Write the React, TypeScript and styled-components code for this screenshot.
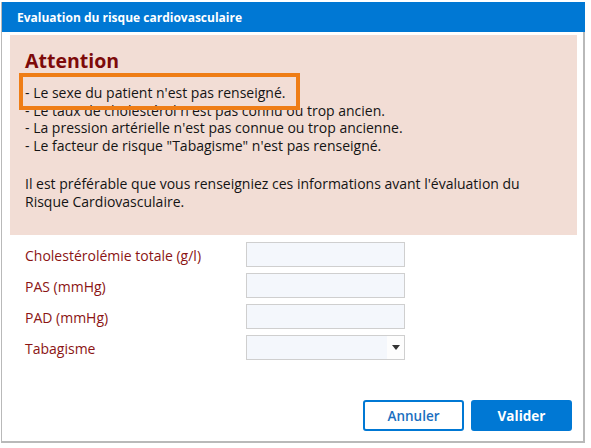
import { createGlobalStyle, styled } from "styled-components";

const GlobalStyle = createGlobalStyle`
  html, body {
    margin: 0;
    padding: 0;
    background: #ffffff;
  }
  body {
    font-family: "Open Sans", "Noto Sans", "Liberation Sans", sans-serif;
    font-size: 14px;
  }
`;

const rows = [
  { label: "Cholestérolémie totale (g/l)", kind: "input" },
  { label: "PAS (mmHg)", kind: "input" },
  { label: "PAD (mmHg)", kind: "input" },
  { label: "Tabagisme", kind: "select" },
];

const App = () => {
  return (
    <>
      <GlobalStyle />
      <Page>
        <Dialog>
          <TitleBar>Evaluation du risque cardiovasculaire</TitleBar>
          <Body>
            <Warning>
              <WarningTitle>Attention</WarningTitle>
              <WarningList>
                <Line>- Le sexe du patient n'est pas renseigné.</Line>
                <Line>- Le taux de cholestérol n'est pas connu ou trop ancien.</Line>
                <Line>- La pression artérielle n'est pas connue ou trop ancienne.</Line>
                <Line>- Le facteur de risque "Tabagisme" n'est pas renseigné.</Line>
              </WarningList>
              <Advice>
                Il est préférable que vous renseigniez ces informations avant l'évaluation du
                <br />
                Risque Cardiovasculaire.
              </Advice>
              <Highlight />
            </Warning>

            <Form>
              {rows.map((row) => (
                <Row key={row.label}>
                  <Label>{row.label}</Label>
                  {row.kind === "select" ? (
                    <SelectBox>
                      <SelectValue />
                      <SelectArrow>
                        <svg width="8" height="5" viewBox="0 0 8 5">
                          <path d="M0 0h8L4 5z" fill="#333" />
                        </svg>
                      </SelectArrow>
                    </SelectBox>
                  ) : (
                    <Field />
                  )}
                </Row>
              ))}
            </Form>

            <Footer>
              <Button $primary={false}>Annuler</Button>
              <Button $primary>Valider</Button>
            </Footer>
          </Body>
        </Dialog>
      </Page>
    </>
  );
};

export default App;

const Page = styled("div")({
  width: "591px",
  height: "448px",
  paddingTop: "2px",
  paddingLeft: "1px",
  boxSizing: "border-box",
  overflow: "hidden",
});

const Dialog = styled("div")({
  width: "584px",
  height: "441px",
  boxSizing: "border-box",
  borderLeft: "1px solid #b9b9b9",
  borderRight: "2px solid #b9b9b9",
  borderBottom: "2px solid #b9b9b9",
  background: "#ffffff",
  display: "flex",
  flexDirection: "column",
});

const TitleBar = styled("div")({
  height: "30px",
  background: "#0078d4",
  color: "#ffffff",
  fontWeight: 700,
  fontSize: "12px",
  display: "flex",
  alignItems: "center",
  paddingLeft: "15px",
  marginRight: "-2px",
});

const Body = styled("div")({
  flex: 1,
  display: "flex",
  flexDirection: "column",
  padding: "3px 6px 10px 8px",
});

const Warning = styled("div")({
  position: "relative",
  height: "200px",
  boxSizing: "border-box",
  background: "#f2ddd5",
  padding: "14px 15px 0 15px",
  color: "#141414",
});

const WarningTitle = styled("div")({
  color: "#7d0a0a",
  fontSize: "19.5px",
  fontWeight: 700,
  lineHeight: "24px",
});

const WarningList = styled("div")({
  marginTop: "11px",
});

const Line = styled("div")({
  lineHeight: "17.5px",
});

const Advice = styled("div")({
  marginTop: "21px",
  lineHeight: "17.5px",
});

const Highlight = styled("div")({
  position: "absolute",
  left: "9px",
  top: "38px",
  width: "281px",
  height: "37px",
  boxSizing: "border-box",
  border: "4px solid #ef7d16",
});

const Form = styled("div")({
  display: "flex",
  flexDirection: "column",
  gap: "6px",
  marginTop: "7px",
  paddingLeft: "15px",
});

const Row = styled("div")({
  display: "grid",
  gridTemplateColumns: "221px 159px",
  alignItems: "center",
  height: "25px",
});

const Label = styled("div")({
  color: "#8b1414",
  paddingTop: "2px",
});

const Field = styled("div")({
  height: "25px",
  boxSizing: "border-box",
  border: "1px solid #cfcfcf",
  background: "#f4f7fc",
});

const SelectBox = styled("div")({
  height: "25px",
  boxSizing: "border-box",
  border: "1px solid #cfcfcf",
  background: "#fdfdfd",
  display: "flex",
});

const SelectValue = styled("div")({
  flex: 1,
  background: "#f4f7fc",
});

const SelectArrow = styled("div")({
  width: "17px",
  display: "flex",
  alignItems: "center",
  justifyContent: "center",
});

const Footer = styled("div")({
  marginTop: "auto",
  display: "flex",
  justifyContent: "flex-end",
  gap: "7px",
  paddingRight: "5px",
});

const Button = styled("button")<{ $primary: boolean }>((p) => ({
  width: "101px",
  height: "31px",
  boxSizing: "border-box",
  borderRadius: "3px",
  border: "2px solid #0078d4",
  background: p.$primary ? "#0078d4" : "#ffffff",
  color: p.$primary ? "#ffffff" : "#1a6fc0",
  fontFamily: "inherit",
  fontSize: "13.5px",
  fontWeight: p.$primary ? 700 : 600,
  cursor: "pointer",
}));
